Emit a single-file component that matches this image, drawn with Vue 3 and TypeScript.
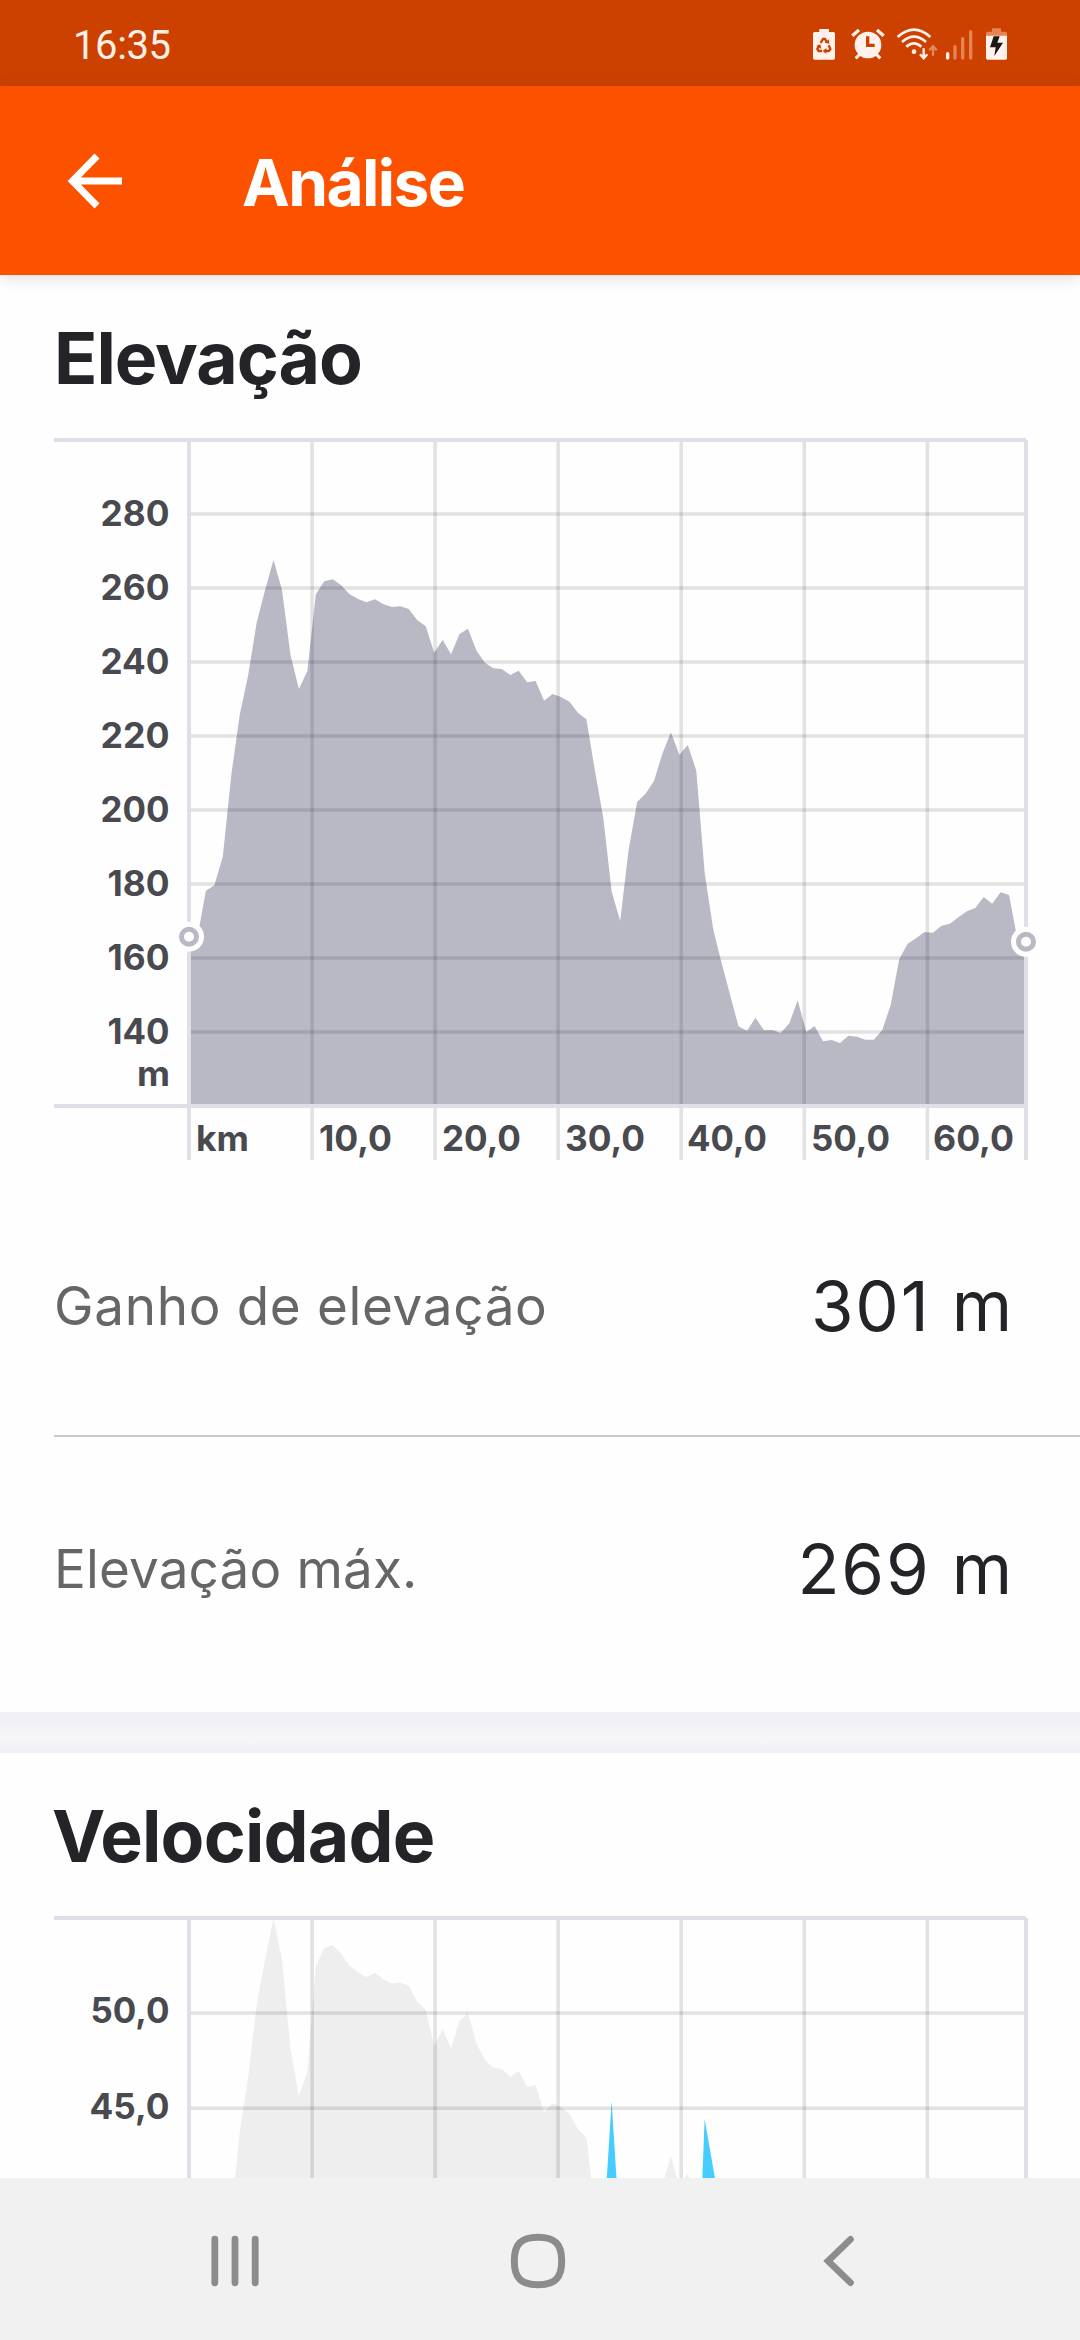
<script setup lang="ts">
interface Tick {
  label: string
  y: number
  width: number
}

interface DistanceTick {
  label: string
  x: number
  start: number
  width: number
}

interface Stat {
  label: string
  value: string
  key: string
}

const LEFT = 189
const RIGHT = 1026
const ELEVATION_TOP = 440

// Elevation samples at equal distance steps, as heights in the first chart.
const profile: number[] = [
  936.7, 937, 890.7, 885.3, 856.7, 775, 715, 675, 623, 590, 560, 590, 655, 689, 671, 594.3, 581.3,
  579.3, 585.3, 594.3, 599, 602.3, 599.3, 604.3, 607, 606.3, 609, 620.3, 626.3, 652.7, 640, 654.3,
  634, 628.7, 650.7, 662.7, 668.3, 669, 675, 670.7, 682.3, 681, 700.7, 694, 697, 701.7, 712.7,
  719.3, 770, 818, 891.7, 921, 850, 802, 793.7, 781, 753.3, 732.3, 754.7, 745, 770.7, 873, 929.3,
  963, 995, 1026.3, 1030.7, 1017.7, 1030.3, 1030, 1033, 1023.3, 1000.3, 1032, 1026, 1041.3, 1040,
  1043, 1035.7, 1036.7, 1039.7, 1039.7, 1030, 1005, 959.3, 943.7, 938.3, 932, 932.7, 925.7, 923.7,
  917.3, 911.3, 908, 897, 903.7, 892.3, 895, 940, 941.7,
]

const step = (RIGHT - LEFT) / (profile.length - 1)

function area(project: (y: number) => number, base: number): string {
  const line = profile.map((y, i) => `${(LEFT + i * step).toFixed(1)},${project(y).toFixed(1)}`)
  return [`${LEFT},${base}`, ...line, `${RIGHT},${base}`].join(' ')
}

const elevationArea = area((y) => y, 1106)
const backdropArea = area((y) => 1919 + (y - 560.3) * 1.378, 2700)

const elevationTicks: Tick[] = [280, 260, 240, 220, 200, 180, 160, 140].map((v) => ({
  label: String(v),
  y: ELEVATION_TOP + (300 - v) * 3.7,
  width: v >= 200 ? 69 : 62,
}))

const speedTicks: Tick[] = [
  { label: '50,0', y: 2013, width: 79 },
  { label: '45,0', y: 2108.2, width: 80 },
]

const distanceTicks: DistanceTick[] = [
  { label: '10,0', x: 312.1, start: 319, width: 73 },
  { label: '20,0', x: 435.1, start: 442, width: 79 },
  { label: '30,0', x: 558.1, start: 565, width: 80 },
  { label: '40,0', x: 681.2, start: 687, width: 80 },
  { label: '50,0', x: 804.3, start: 811, width: 79 },
  { label: '60,0', x: 927.4, start: 933, width: 81 },
]

const stats: Stat[] = [
  { key: 'gain', label: 'Ganho de elevação', value: '301 m' },
  { key: 'max', label: 'Elevação máx.', value: '269 m' },
]
</script>

<template>
  <div class="screen">
    <div class="status">
      <span class="clock">16:35</span>
      <div class="status-icons">
        <svg class="battery-saver" width="24" height="35" viewBox="96 81 72 105">
          <path d="M118 87H147V96H160Q165 96 165 101V174Q165 179 160 179H104Q99 179 99 174V101Q99 96 104 96H118Z" fill="#fff1eb" />
          <g fill="none" stroke="#cc4100" stroke-width="7">
            <path d="M122 129L129 117H135L141 127" />
            <path d="M146 136L151 147L146 153H135" />
            <path d="M126 153H116L112 147L118 136" />
          </g>
          <path d="M134 128L148 131L147 118ZM139 144V161L128 153ZM109 138L121 133L124 147Z" fill="#cc4100" />
        </svg>
        <svg class="alarm" width="34" height="35" viewBox="213 81 102 105">
          <circle cx="264" cy="135" r="40" fill="#fff1eb" />
          <g stroke="#fff1eb" stroke-width="10">
            <path d="M217 107L237 90M311 107L291 90" />
            <path d="M227 175L240 162M301 175L288 162" stroke-width="9" />
          </g>
          <path d="M263 109V136H284" fill="none" stroke="#cc4100" stroke-width="10" />
        </svg>
        <svg class="wifi" width="42" height="35" viewBox="348 81 126 105">
          <g fill="none" stroke="#fff1eb" stroke-width="8">
            <path d="M353 111Q402 67 451 111" />
            <path d="M366 126Q402 94 438 126" />
            <path d="M379 140Q402 120 424 140" />
            <path d="M431 145V174M420 163L431 175L442 163" stroke-width="7" />
          </g>
          <circle cx="402" cy="155" r="7" fill="#fff1eb" />
          <path d="M459 167V140M448 151L459 139L470 151" fill="none" stroke="#e58a60" stroke-width="7" />
        </svg>
        <svg class="signal" width="28" height="35" viewBox="495 81 84 105">
          <g stroke-linecap="round" stroke-width="10">
            <path d="M503 161V174" stroke="#fff1eb" />
            <path d="M525 140V174M548 116V174M572 95V174" stroke="#e58455" />
          </g>
        </svg>
        <svg class="battery" width="23" height="35" viewBox="615 81 69 105">
          <path d="M636 85H663V95H676Q681 95 681 100V108H618V100Q618 95 623 95H636Z" fill="#e58455" />
          <path d="M618 107H681V174Q681 179 676 179H623Q618 179 618 174Z" fill="#fff1eb" />
          <path d="M641 109H659L652 128H669L643 168L647 142H630Z" fill="#1c1614" />
        </svg>
      </div>
    </div>

    <header class="app-bar">
      <svg class="back-arrow" width="56" height="56" viewBox="0 0 56 56">
        <path d="M55 28H5M30 3L5.500 28L30 53" fill="none" stroke="#fff" stroke-width="7" />
      </svg>
      <h1 class="title">Análise</h1>
    </header>

    <main class="content">
      <section class="section">
        <h2 class="heading elevation">Elevação</h2>
        <svg class="chart" width="1080" height="722" viewBox="0 438 1080 722">
          <polygon :points="elevationArea" fill="#b9b9c6" />
          <g class="grid">
            <line v-for="t in elevationTicks" :key="t.label" :x1="191" :x2="1024" :y1="t.y" :y2="t.y" />
            <line v-for="t in distanceTicks" :key="t.label" :x1="t.x" :x2="t.x" y1="442" y2="1160" />
          </g>
          <g class="frame">
            <line x1="54" x2="1026" y1="440" y2="440" />
            <line x1="54" x2="1026" y1="1106" y2="1106" />
            <line x1="189" x2="189" y1="440" y2="1160" />
            <line x1="1026" x2="1026" y1="440" y2="1160" />
          </g>
          <g class="marker">
            <circle class="halo" cx="189" cy="936.700" r="15" />
            <circle class="ring" cx="189" cy="936.700" r="7.500" />
            <circle class="halo" cx="1026" cy="941.700" r="15" />
            <circle class="ring" cx="1026" cy="941.700" r="7.500" />
          </g>
          <g class="tick">
            <text
              v-for="t in elevationTicks"
              :key="t.label"
              :x="169.500 - t.width"
              :y="t.y + 12.3"
              :textLength="t.width"
              lengthAdjust="spacingAndGlyphs"
            >{{ t.label }}</text>
            <text x="137" y="1086" textLength="33" lengthAdjust="spacingAndGlyphs">m</text>
            <text x="196" y="1151" textLength="53" lengthAdjust="spacingAndGlyphs">km</text>
            <text
              v-for="t in distanceTicks"
              :key="t.label"
              :x="t.start"
              y="1151"
              :textLength="t.width"
              lengthAdjust="spacingAndGlyphs"
            >{{ t.label }}</text>
          </g>
        </svg>
        <dl class="stats">
          <div v-for="s in stats" :key="s.key" class="stat" :class="s.key">
            <dt>{{ s.label }}</dt>
            <dd>{{ s.value }}</dd>
          </div>
        </dl>
      </section>

      <div class="divider"></div>

      <section class="section">
        <h2 class="heading speed">Velocidade</h2>
        <svg class="chart" width="1080" height="722" viewBox="0 1916 1080 722">
          <polygon :points="backdropArea" fill="#eeeeee" />
          <polygon points="603.2,2236 611.600,2101 620.1,2236" fill="#46ccff" />
          <polygon points="700,2240 704.600,2119 725.800,2240" fill="#46ccff" />
          <g class="grid">
            <line v-for="t in speedTicks" :key="t.label" :x1="191" :x2="1024" :y1="t.y" :y2="t.y" />
            <line v-for="t in distanceTicks" :key="t.label" :x1="t.x" :x2="t.x" y1="1920" y2="2638" />
          </g>
          <g class="frame">
            <line x1="54" x2="1026" y1="1918" y2="1918" />
            <line x1="189" x2="189" y1="1918" y2="2638" />
            <line x1="1026" x2="1026" y1="1918" y2="2638" />
          </g>
          <g class="tick">
            <text
              v-for="t in speedTicks"
              :key="t.label"
              :x="169.500 - t.width"
              :y="t.y + 10.3"
              :textLength="t.width"
              lengthAdjust="spacingAndGlyphs"
            >{{ t.label }}</text>
          </g>
        </svg>
      </section>
    </main>

    <nav class="nav">
      <svg width="48" height="56" viewBox="0 0 48 56">
        <path d="M3.800 6.200V49.800M24 6.200V49.800M44.200 6.200V49.800" fill="none" stroke="#8c8c8c" stroke-width="6.800" stroke-linecap="round" />
      </svg>
      <svg class="home" width="56" height="56" viewBox="0 0 56 56">
        <path d="M28 4.300C45 4.300 51.700 11 51.700 28S45 51.700 28 51.700S4.300 45 4.300 28S11 4.300 28 4.300Z" fill="none" stroke="#8c8c8c" stroke-width="7" />
      </svg>
      <svg width="32" height="56" viewBox="0 0 32 56">
        <path d="M27.500 6.300L5 28L27.500 49.700" fill="none" stroke="#8c8c8c" stroke-width="6.600" stroke-linecap="round" />
      </svg>
    </nav>
  </div>
</template>

<style>
body {
  margin: 0;
}
</style>

<style scoped>
.screen {
  width: 1080px;
  height: 2340px;
  display: flex;
  flex-direction: column;
  overflow: hidden;
  background: #fefefe;
  font-family: Inter, "Liberation Sans", sans-serif;
}

.status {
  flex: none;
  box-sizing: border-box;
  height: 86px;
  padding: 0 72px 0 73px;
  display: flex;
  align-items: center;
  justify-content: space-between;
  background: #cc4100;
}

.clock {
  padding-top: 5px;
  color: #fff0e9;
  font-family: Roboto, sans-serif;
  font-size: 40px;
  line-height: 48px;
  letter-spacing: -0.4px;
}

.status-icons {
  display: flex;
  padding-top: 3px;
}

.alarm {
  margin-left: 15px;
}

.wifi {
  margin-left: 11px;
}

.signal {
  margin-left: 7px;
}

.battery {
  margin-left: 12px;
}

.app-bar {
  flex: none;
  z-index: 1;
  box-sizing: border-box;
  height: 189px;
  padding-left: 67px;
  display: flex;
  align-items: center;
  background: #fc5200;
  box-shadow: 0 3px 14px rgba(0, 0, 0, 0.13);
}

.title {
  margin: 0 0 0 119px;
  padding-top: 4px;
  color: #fff;
  font-size: 64px;
  font-weight: 700;
  line-height: 80px;
  letter-spacing: -1.6px;
}

.content {
  flex: 1;
  min-height: 0;
  overflow: hidden;
}

.section {
  display: flex;
  flex-direction: column;
  padding-top: 38px;
}

.heading {
  margin: 0 0 35px 54px;
  height: 90px;
  color: #242428;
  font-size: 71.5px;
  font-weight: 700;
  line-height: 90px;
  letter-spacing: -1px;
}

.speed {
  margin-left: 52px;
  letter-spacing: -0.8px;
}

.chart {
  display: block;
}

.grid line {
  stroke: rgba(0, 0, 0, 0.11);
  stroke-width: 3.6;
}

.frame line {
  stroke: #dfdfe8;
  stroke-width: 4;
}

.halo {
  fill: #fefefe;
}

.ring {
  fill: #fefefe;
  stroke: #b9b9c6;
  stroke-width: 5;
}

.tick text {
  fill: #494950;
  font-size: 35px;
  font-weight: 700;
}

.stats {
  margin: 16px 0 12px 54px;
}

.stat {
  height: 259px;
  padding-right: 66px;
  display: flex;
  align-items: center;
  justify-content: space-between;
}

.stat + .stat {
  height: 263px;
  border-top: 2px solid #c9c9cf;
}

.stat dt {
  color: #666;
  font-size: 53px;
  font-weight: 400;
  line-height: 70px;
  letter-spacing: 0.67px;
}

.stat.max dt {
  letter-spacing: 0.15px;
}

.stat dd {
  margin: 0;
  color: #242428;
  font-size: 69px;
  font-weight: 400;
  line-height: 90px;
  letter-spacing: 1.8px;
}

.divider {
  height: 41px;
  background: linear-gradient(#f0eff5, #f0eff5 20%, #f6f6f8 66%, #f0eff5);
}

.nav {
  flex: none;
  box-sizing: border-box;
  height: 162px;
  padding: 4px 225px 0 211px;
  display: flex;
  align-items: center;
  justify-content: space-between;
  background: #f1f1f1;
}

.home {
  margin-right: 7px;
}
</style>
